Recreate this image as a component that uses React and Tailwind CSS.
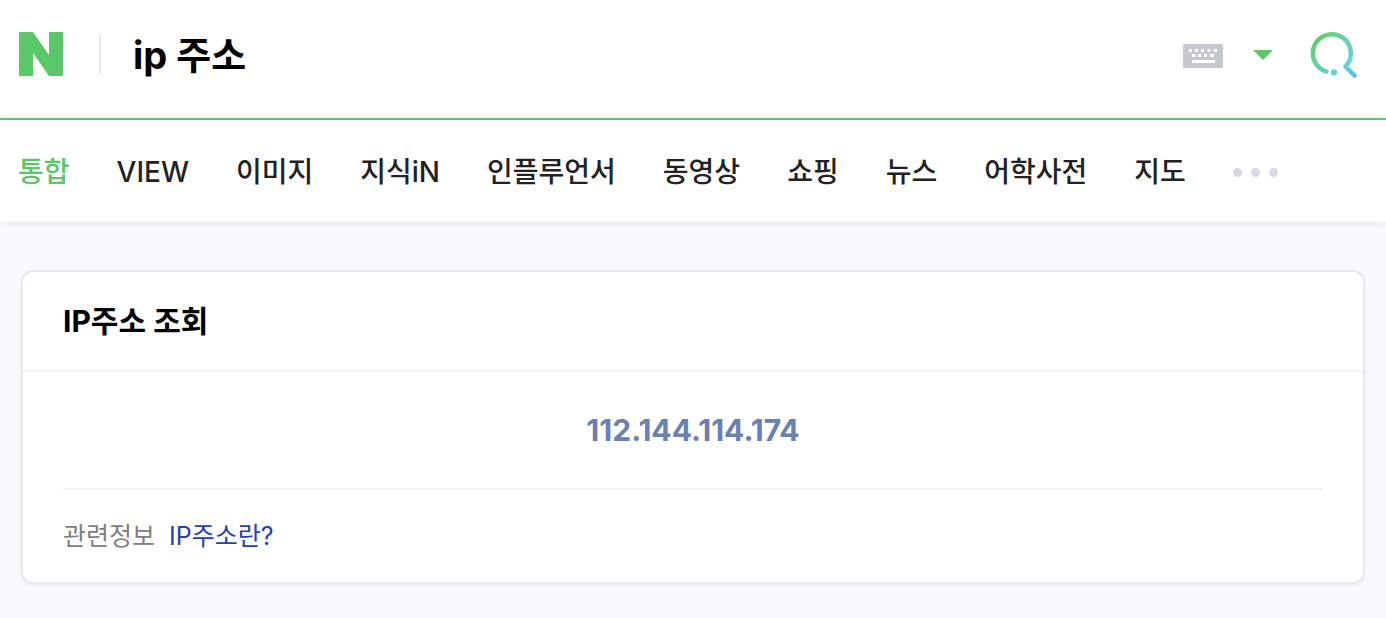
import { useState } from "react";

const TABS = ["통합", "VIEW", "이미지", "지식iN", "인플루언서", "동영상", "쇼핑", "뉴스", "어학사전", "지도"];

function Logo() {
    return (
        <svg width="44" height="44" viewBox="0 0 44 44" fill="#5ac768" aria-hidden="true">
            <path d="M0 0h14l16 23V0h14v44H30L14 21v23H0z" />
        </svg>
    );
}

function KeyboardIcon() {
    return (
        <svg width="40" height="24" viewBox="0 0 40 24" aria-hidden="true">
            <rect width="40" height="24" rx="1.5" fill="#c5c8cf" />
            <g fill="#fff">
                <path d="M6 5h3v3H6zM12 5h3v3h-3zM18 5h3v3h-3zM24.500 5h3v3h-3zM31 5h3v3h-3z" />
                <path d="M9 10h3.500v3H9zM15 10h3v3h-3zM21 10h3v3h-3zM27 10h4v3h-4z" />
                <path d="M9 16h23v3H9z" />
            </g>
        </svg>
    );
}

function SearchIcon() {
    return (
        <svg width="48" height="48" viewBox="0 0 48 48" fill="none" aria-hidden="true">
            <defs>
                <linearGradient id="searchGradient" x1="6" y1="6" x2="46" y2="46" gradientUnits="userSpaceOnUse">
                    <stop offset="0" stopColor="#58c864" />
                    <stop offset="0.150" stopColor="#63d57e" />
                    <stop offset="0.700" stopColor="#66d3cf" />
                    <stop offset="1" stopColor="#5cb8f2" />
                </linearGradient>
            </defs>
            <path
                d="M16.500 40.500A19 19 0 1 1 35.500 35.500L44.500 44.500"
                stroke="url(#searchGradient)"
                strokeWidth="4.500"
                strokeLinecap="round"
                strokeLinejoin="round"
            />
            <circle cx="24" cy="41.300" r="3.100" fill="#66d0d2" />
        </svg>
    );
}

function SearchBar() {
    const [query, setQuery] = useState("ip 주소");

    return (
        <header className="border-b-2 border-[#61c978] bg-white">
            <form
                role="search"
                className="flex h-[118px] items-center pr-7 pb-2.5 pl-[19px]"
                onSubmit={(e) => e.preventDefault()}
            >
                <a href="#home" aria-label="NAVER">
                    <Logo />
                </a>
                <span className="ml-9 h-10 w-0.5 bg-[#e6eaee]" />
                <input
                    type="text"
                    aria-label="검색어"
                    value={query}
                    onChange={(e) => setQuery(e.target.value)}
                    className="ml-8 h-16 min-w-0 flex-1 bg-transparent pb-1 text-[38px] font-bold text-black outline-none"
                />
                <div className="flex items-center pt-0.5">
                    <button type="button" aria-label="한글 입력기" className="pt-0.5">
                        <KeyboardIcon />
                    </button>
                    <button type="button" aria-label="자동완성 펼치기" className="ml-[30px]">
                        <svg width="20" height="10" viewBox="0 0 20 10" fill="#5ac768" aria-hidden="true">
                            <path d="M0 0h20L10 10z" />
                        </svg>
                    </button>
                    <button type="submit" aria-label="검색" className="ml-[37px]">
                        <SearchIcon />
                    </button>
                </div>
            </form>
        </header>
    );
}

function TabNav() {
    return (
        <nav className="relative flex h-[102px] items-center gap-[47px] bg-white pt-0.5 pl-[18px] text-[28px] leading-10 font-medium whitespace-nowrap text-[#222] shadow-[0_2px_8px_rgba(0,0,0,0.08)]">
            {TABS.map((tab, i) => (
                <a key={tab} href="#tab" className={i === 0 ? "text-[#5ac768]" : ""}>
                    {tab}
                </a>
            ))}
            <button type="button" aria-label="더보기" className="flex gap-[9px]">
                <span className="size-[9px] rounded-full bg-[#d8dae1]" />
                <span className="size-[9px] rounded-full bg-[#d8dae1]" />
                <span className="size-[9px] rounded-full bg-[#d8dae1]" />
            </button>
        </nav>
    );
}

function IpCard() {
    return (
        <section className="rounded-xl border-2 border-[#e8e9ed] bg-white shadow-[0_2px_4px_rgba(0,0,0,0.05)]">
            <h2 className="border-b-2 border-[#f1f1f3] px-10 py-7 text-[30px] leading-[42px] font-bold text-black">
                IP주소 조회
            </h2>
            <div className="px-10">
                <p className="border-b-2 border-[#f2f2f3] py-[38px] text-center text-[30px] leading-10 font-bold text-[#6b80b3]">
                    112.144.114.174
                </p>
                <p className="flex gap-3.5 py-7 text-[25px] leading-9 text-[#808080]">
                    <span>관련정보</span>
                    <a href="#ip" className="text-[#263fb3]">IP주소란?</a>
                </p>
            </div>
        </section>
    );
}

function App() {
    return (
        <div className="min-h-screen bg-[#f9fafc] font-['Inter','Noto_Sans_CJK_KR',sans-serif]">
            <SearchBar />
            <TabNav />
            <main className="px-[21px] pt-12 pb-8">
                <IpCard />
            </main>
        </div>
    );
}

export default App;
